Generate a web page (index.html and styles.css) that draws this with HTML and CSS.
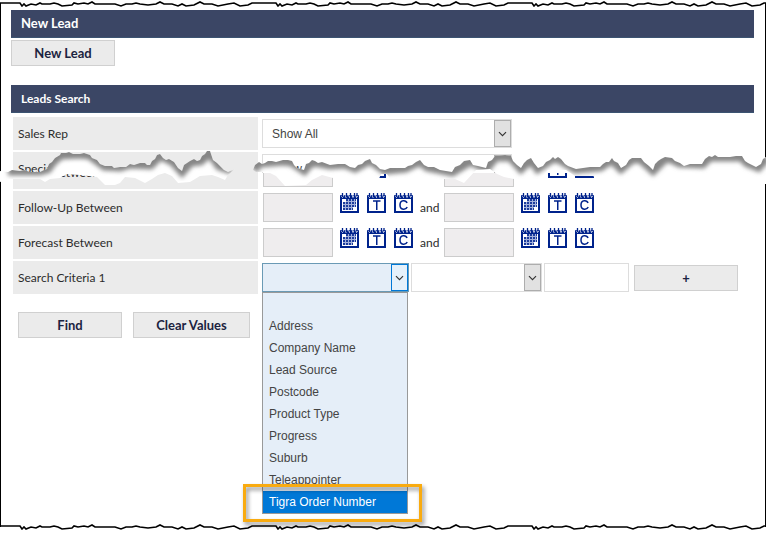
FILE: index.html
```
<!DOCTYPE html>
<html lang="en">
<head>
  <meta charset="UTF-8">
  <title>Leads Search</title>
  <meta name="viewport" content="width=device-width, initial-scale=1.0">
  <link rel="stylesheet" href="styles.css">
</head>
<body>
  <!-- shared shapes -->
  <svg class="defs" width="0" height="0" aria-hidden="true">
    <symbol id="cal-frame" viewBox="0 0 19 20">
      <path fill="#00238c" d="M0 2h19v18H0z"/>
      <path fill="#fff" d="M2 6h15v12H2z"/>
      <path fill="none" stroke="#fff" stroke-width=".8" d="M1 2.500l1.500 2 2-4 1.500 4 2-4 1.500 4 2-4 1.500 4 2-4 1.500 4 1.500-2"/>
      <path fill="none" stroke="#00238c" stroke-width="1.300" d="M2.500 0v4M6.500 0v4M10.500 0v4M14.500 0v4M17 0v3"/>
    </symbol>
    <symbol id="cal-grid" viewBox="0 0 19 20">
      <use href="#cal-frame"/>
      <path fill="#a5b2dc" d="M6 6h10v8H6zM3 9h4v8H3zM6 13h7v4H6z"/>
      <path stroke="#1c3c9c" stroke-width="2" stroke-dasharray="2 1" d="M6 7h10M3 10h13M3 13h13M3 16h10"/>
    </symbol>
    <symbol id="cal-t" viewBox="0 0 19 20">
      <use href="#cal-frame"/>
      <path fill="none" stroke="#00238c" stroke-width="1.500" d="M6 8h7.500M9.750 8v9"/>
    </symbol>
    <symbol id="cal-c" viewBox="0 0 19 20">
      <use href="#cal-frame"/>
      <path fill="none" stroke="#00238c" stroke-width="1.500" d="M13 10C12 7 6 6.500 6 12s6 5 7.200 2"/>
    </symbol>
    <symbol id="chevron" viewBox="0 0 17 27">
      <path fill="none" stroke="#333" stroke-width="1.300" d="M4.500 12l4 4 4-4"/>
    </symbol>
    <pattern id="wave" width="256" height="7" patternUnits="userSpaceOnUse">
      <polyline fill="none" stroke="#000" stroke-width="1.600" points="0,3 16,3 20,3 22,6 24,4 26,6 31,4 36,5 40,3 42,4 50,4 54,3 58,4 62,6 72,5 74,3 78,4 84,3 88,4 92,2 95,4 102,4 110,4 115,4 121,6 126,4 132,4 136,3 140,4 148,5 156,4 160,2 164,4 172,4 178,6 182,4 186,6 194,5 200,2 204,4 212,4 218,6 228,4 234,3 240,6 248,5 252,3 256,3"/>
    </pattern>
  </svg>

  <svg class="edge" aria-hidden="true"><rect width="100%" height="7" fill="url(#wave)"/></svg>
  <main class="frame">
    <h1 class="bar">New Lead</h1>
    <button class="btn" type="button">New Lead</button>

    <h2 class="bar bar-search">Leads Search</h2>
    <form class="search">
      <div class="row">
        <label class="name" for="sales-rep">Sales Rep</label>
        <div class="fields">
          <span class="picker picker-wide">
            <select id="sales-rep"><option>Show All</option></select>
            <svg class="arrow" aria-hidden="true"><use href="#chevron"/></svg>
          </span>
        </div>
      </div>

      <!-- two rows cut off where the paper is torn -->
      <div class="torn">
        <div class="cut cut-top">
          <div class="row">
            <label class="name" for="special">Special</label>
            <div class="fields">
              <span class="picker picker-wide">
                <select id="special"><option>Show All</option></select>
                <svg class="arrow" aria-hidden="true"><use href="#chevron"/></svg>
              </span>
            </div>
          </div>
        </div>
        <div class="cut cut-bottom">
          <div class="row">
            <label class="name" for="order-from">Order Between</label>
            <div class="fields dates">
              <input class="date" id="order-from" type="text">
              <span class="icons">
                <button type="button" aria-label="Pick date"><svg><use href="#cal-grid"/></svg></button>
                <button type="button" aria-label="Today"><svg><use href="#cal-t"/></svg></button>
                <button type="button" aria-label="Clear"><svg><use href="#cal-c"/></svg></button>
              </span>
              <span class="and"></span>
              <input class="date" type="text" aria-label="Order to">
              <span class="icons">
                <button type="button" aria-label="Pick date"><svg><use href="#cal-grid"/></svg></button>
                <button type="button" aria-label="Today"><svg><use href="#cal-t"/></svg></button>
                <button type="button" aria-label="Clear"><svg><use href="#cal-c"/></svg></button>
              </span>
            </div>
          </div>
        </div>
        <svg class="tear" viewBox="0 0 766 40" preserveAspectRatio="none" aria-hidden="true">
          <defs>
            <filter id="soft" x="-5%" y="-50%" width="110%" height="200%"><feGaussianBlur stdDeviation="2"/></filter>
            <clipPath id="paper">
              <path id="paper-left" d="M0 21L8 22 12 20 20 21 24 20 30 22 40 22 44 20 47 19 49 14 52 12 55 8 60 5 61 3 66 3 69 2 73 4 80 4 84 3 90 5 92 8 97 10 100 14 105 16 112 16 114 18 120 17 126 17 130 14 134 15 140 13 145 13 147 15 150 15 152 11 155 9 157 5 160 4 163 8 166 10 169 9 174 12 178 18 182 21 184 15 190 11 194 9 197 11 200 10 202 6 205 4 207 1 210 1 212 7 213 10 217 13 220 16 224 20 228 22 235 19 228 25 225 30 218 27 212 25 200 26 190 32 178 33 172 26 165 23 158 25 152 29 145 33 135 28 125 27 120 33 115 35 105 35 97 27 80 25 66 24 60 28 50 29 45 32 40 29 10 29 0 32z"/>
              <path id="paper-right" d="M253 20L255 15 259 12 262 14 265 13 268 11 272 11 276 12 283 10 288 10 292 11 294 15 297 18 304 20 306 14 309 13 312 10 315 11 318 13 322 12 330 15 338 14 345 14 350 17 355 18 358 15 362 14 365 11 370 9 372 13 376 15 380 19 385 20 390 18 395 18 405 18 408 16 412 15 416 12 420 10 424 15 428 17 434 17 440 20 452 22 455 17 460 15 464 11 470 10 473 15 478 16 486 18 488 12 492 10 495 6 505 5 511 6 513 11 517 15 521 18 524 13 527 10 531 8 534 13 538 18 543 16 546 12 550 10 553 7 555 9 558 7 561 9 565 14 568 16 576 19 590 17 600 17 603 14 606 12 609 12 612 8 614 11 618 13 621 18 626 15 629 10 632 8 641 8 644 12 649 16 653 20 655 14 658 11 661 9 665 7 672 8 675 11 680 13 684 16 690 14 696 14 702 14 705 9 709 6 712 7 715 5 718 7 730 7 736 6 742 6 745 11 748 13 756 17 761 14 763 9 766 7V34L600 30 593 26 575 26 566 20 548 20 540 29 514 29 504 27 497 24 490 19 476 20 464 33 455 29 444 29 430 36 395 36 387 24 381 24 376 36 340 36 333 28 322 25 312 30 306 35 285 36 276 26 268 22 256 22z"/>
            </clipPath>
          </defs>
          <use href="#paper-left" fill="#fff"/>
          <use href="#paper-right" fill="#fff"/>
          <g clip-path="url(#paper)">
            <g filter="url(#soft)" fill="none" stroke="#868686" stroke-width="11">
              <polyline points="8,20 20,20 40,20 47,18 52,11 60,4 80,3 90,4 105,15 120,16 130,13 150,14 160,4 174,11 182,20 190,11 200,10 210,1 220,15 232,19"/>
              <polyline points="253,19 259,12 283,10 292,11 304,19 309,13 315,11 330,14 345,13 355,17 370,9 385,19 405,17 420,10 428,16 452,21 470,10 486,17 495,6 511,6 521,17 531,8 538,17 553,7 561,9 576,18 600,16 612,8 621,17 632,8 641,8 653,19 665,7 672,8 680,12 702,13 709,6 742,6 748,12 758,16 766,7"/>
            </g>
          </g>
        </svg>
      </div>

      <div class="row">
        <label class="name" for="follow-from">Follow-Up Between</label>
        <div class="fields dates">
          <input class="date" id="follow-from" type="text">
          <span class="icons">
            <button type="button" aria-label="Pick date"><svg><use href="#cal-grid"/></svg></button>
            <button type="button" aria-label="Today"><svg><use href="#cal-t"/></svg></button>
            <button type="button" aria-label="Clear"><svg><use href="#cal-c"/></svg></button>
          </span>
          <span class="and">and</span>
          <input class="date" type="text" aria-label="Follow-up to">
          <span class="icons">
            <button type="button" aria-label="Pick date"><svg><use href="#cal-grid"/></svg></button>
            <button type="button" aria-label="Today"><svg><use href="#cal-t"/></svg></button>
            <button type="button" aria-label="Clear"><svg><use href="#cal-c"/></svg></button>
          </span>
        </div>
      </div>

      <div class="row">
        <label class="name" for="forecast-from">Forecast Between</label>
        <div class="fields dates">
          <input class="date" id="forecast-from" type="text">
          <span class="icons">
            <button type="button" aria-label="Pick date"><svg><use href="#cal-grid"/></svg></button>
            <button type="button" aria-label="Today"><svg><use href="#cal-t"/></svg></button>
            <button type="button" aria-label="Clear"><svg><use href="#cal-c"/></svg></button>
          </span>
          <span class="and">and</span>
          <input class="date" type="text" aria-label="Forecast to">
          <span class="icons">
            <button type="button" aria-label="Pick date"><svg><use href="#cal-grid"/></svg></button>
            <button type="button" aria-label="Today"><svg><use href="#cal-t"/></svg></button>
            <button type="button" aria-label="Clear"><svg><use href="#cal-c"/></svg></button>
          </span>
        </div>
      </div>

      <div class="row">
        <label class="name" for="criteria">Search Criteria 1</label>
        <div class="fields">
          <span class="picker picker-open">
            <select id="criteria"><option></option></select>
            <svg class="arrow" aria-hidden="true"><use href="#chevron"/></svg>
            <ul class="menu" role="listbox" aria-label="Search Criteria 1">
              <li role="option" aria-label="None"></li>
              <li role="option">Address</li>
              <li role="option">Company Name</li>
              <li role="option">Lead Source</li>
              <li role="option">Postcode</li>
              <li role="option">Product Type</li>
              <li role="option">Progress</li>
              <li role="option">Suburb</li>
              <li role="option">Teleappointer</li>
              <li class="active" role="option" aria-selected="true">Tigra Order Number</li>
            </ul>
          </span>
          <span class="picker picker-match">
            <select aria-label="Condition"><option></option></select>
            <svg class="arrow" aria-hidden="true"><use href="#chevron"/></svg>
          </span>
          <input class="value" type="text" aria-label="Value">
          <button class="btn btn-add" type="button">+</button>
        </div>
      </div>

      <div class="actions">
        <button class="btn" type="button">Find</button>
        <button class="btn btn-clear" type="reset">Clear Values</button>
      </div>
    </form>
  </main>
  <svg class="edge" aria-hidden="true"><rect width="100%" height="7" fill="url(#wave)"/></svg>
</body>
</html>
```
FILE: styles.css
```
* {
  box-sizing: border-box;
}

body {
  margin: 0;
  padding-bottom: 4px;
  min-height: 100vh;
  display: flex;
  flex-direction: column;
  background: #fff;
  color: #2b2b2b;
  font-family: Lato, sans-serif;
  font-size: 12px;
}

.defs {
  position: absolute;
}

.edge {
  display: block;
  width: 100%;
  height: 7px;
  flex: none;
}

.frame {
  flex: 1;
  margin: -4px 0;
  padding: 7px 11px 0 10px;
  border: solid #000;
  border-width: 0 1px;
}

.bar {
  margin: 0;
  padding: 0 10px;
  height: 28px;
  line-height: 27px;
  font-size: 13px;
  font-weight: bold;
  color: #fff;
  background: #3b4665;
  border-bottom: 1px solid #3c5472;
}

.bar-search {
  margin-top: 19px;
  font-size: 12px;
}

.btn {
  display: block;
  width: 104px;
  height: 26px;
  padding: 0;
  font-family: inherit;
  font-size: 13px;
  font-weight: bold;
  color: #1b2340;
  background: #ebebeb;
  border: 1px solid #d0d0d0;
  cursor: pointer;
}

.bar + .btn {
  margin-top: 2px;
}

.search {
  padding: 4px 2px 0;
}

.row {
  display: flex;
  gap: 4px;
  height: 33px;
  margin-bottom: 2px;
}

.name {
  width: 245px;
  flex: none;
  padding-left: 5px;
  line-height: 33px;
  background: #ebebeb;
}

.fields {
  display: flex;
  align-items: center;
  gap: 2px;
  height: 33px;
}

/* drop-downs */
.picker {
  position: relative;
  display: grid;
  height: 29px;
  font-family: "Liberation Sans", Arial, sans-serif;
}

.picker select,
.arrow {
  grid-area: 1 / 1;
}

.picker select {
  width: 100%;
  height: 29px;
  padding: 0 9px;
  font: inherit;
  color: #444;
  background: #fff;
  border: 1px solid #ddd;
  border-radius: 0;
  appearance: none;
}

.arrow {
  justify-self: end;
  align-self: center;
  width: 17px;
  height: 27px;
  margin-right: 1px;
  background: #e1e1e1;
  border: 1px solid #adadad;
  pointer-events: none;
}

.picker-wide {
  width: 250px;
}

.picker-open {
  width: 147px;
}

.picker-match {
  width: 131px;
}

.picker-open select {
  background: #e5eef8;
  border-color: #6a9ab5;
}

.picker-open .arrow {
  background: #e5f1fb;
  border-color: #0078d7;
}

.menu {
  position: absolute;
  top: 100%;
  left: 0;
  z-index: 1;
  width: 146px;
  margin: 0;
  padding: 0;
  list-style: none;
  color: #444;
  background: #e5eef8;
  border: 1px solid #999;
}

.menu li {
  height: 22px;
  padding-left: 6px;
  line-height: 22px;
  white-space: nowrap;
}

.menu .active {
  position: relative;
  color: #fff;
  background: #0078d7;
}

/* orange marker round the picked entry */
.menu .active::after {
  content: "";
  position: absolute;
  inset: -7px -15px -9px -20px;
  border: 3px solid #f9ab10;
  filter: drop-shadow(2px 3px 2px rgba(0, 0, 0, 0.45));
}

/* date ranges */
.dates {
  padding-left: 1px;
  gap: 7px;
}

.date {
  width: 70px;
  height: 29px;
  background: #efedee;
  border: 1px solid #ccc;
}

.icons {
  display: flex;
  gap: 8px;
  height: 29px;
}

.icons button {
  width: 19px;
  height: 20px;
  padding: 0;
  background: none;
  border: 0;
  cursor: pointer;
}

.icons svg {
  display: block;
  width: 19px;
  height: 20px;
}

.and {
  width: 24px;
  margin-right: -7px;
}

.value {
  width: 85px;
  height: 29px;
  border: 1px solid #ddd;
}

.btn-add {
  margin-left: 3px;
}

/* torn strip */
.torn {
  position: relative;
  margin-bottom: 2px;
}

.cut {
  display: flex;
  overflow: hidden;
}

.cut .row {
  flex: none;
  margin: 0;
}

.cut-top {
  height: 21px;
}

.cut-bottom {
  height: 16px;
  align-items: flex-end;
}

.tear {
  position: absolute;
  top: -2px;
  left: -13px;
  width: 100vw;
  height: 40px;
}

.actions {
  display: flex;
  gap: 11px;
  padding: 16px 5px;
}

.btn-clear {
  width: 117px;
}
```
